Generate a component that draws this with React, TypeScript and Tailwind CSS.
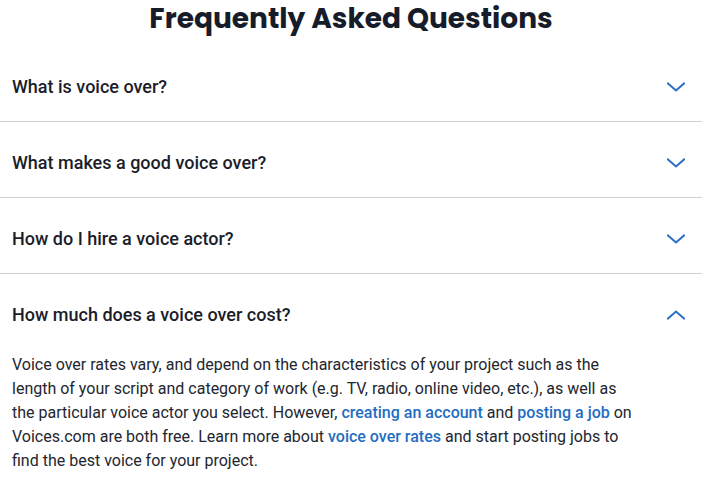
import { useState } from 'react'

interface FaqItem {
  question: string
  answer?: React.ReactNode
}

const items: FaqItem[] = [
  { question: 'What is voice over?' },
  { question: 'What makes a good voice over?' },
  { question: 'How do I hire a voice actor?' },
  {
    question: 'How much does a voice over cost?',
    answer: (
      <>
        Voice over rates vary, and depend on the characteristics of your project such as the length of your
        script and category of work (e.g. TV, radio, online video, etc.), as well as the particular voice actor
        you select. However,{' '}
        <a href="#" className="font-medium text-[#1f6dc2]">
          creating an account
        </a>{' '}
        and{' '}
        <a href="#" className="font-medium text-[#1f6dc2]">
          posting a job
        </a>{' '}
        on Voices.com are both free. Learn more about{' '}
        <a href="#" className="font-medium text-[#1f6dc2]">
          voice over rates
        </a>{' '}
        and start posting jobs to find the best voice for your project.
      </>
    ),
  },
]

function Chevron({ open }: { open: boolean }) {
  return (
    <svg width="18" height="10" viewBox="0 0 18 10" fill="none" className={open ? 'rotate-180' : ''}>
      <path d="M1 1.5L9 8.5L17 1.5" stroke="#2b6fc7" strokeWidth="2" strokeLinecap="square" />
    </svg>
  )
}

export default function App() {
  const [openIndex, setOpenIndex] = useState<number | null>(3)

  return (
    <div className="w-[702px] bg-white font-['Roboto',sans-serif] text-[#1b1d2a]">
      <h1 className="flex h-[46px] items-start justify-center pt-px font-['Poppins','Lato',sans-serif] text-[28px] leading-[36px] font-bold text-[#171c2a]">
        Frequently Asked Questions
      </h1>

      {items.map((item, i) => {
        const open = openIndex === i
        return (
          <div key={item.question} className={i < items.length - 1 ? 'border-b border-[#cdd2da]' : ''}>
            <button
              type="button"
              onClick={() => setOpenIndex(open ? null : i)}
              className="flex h-[75px] w-full items-center justify-between pt-[6px] pr-[17px] pl-3 text-left"
            >
              <span className="text-[18px] font-medium">{item.question}</span>
              <Chevron open={open} />
            </button>
            {open && item.answer && (
              <p className="pt-1 pr-16 pb-2 pl-3 text-[16px] leading-6 text-[#23262f]">{item.answer}</p>
            )}
          </div>
        )
      })}
    </div>
  )
}
